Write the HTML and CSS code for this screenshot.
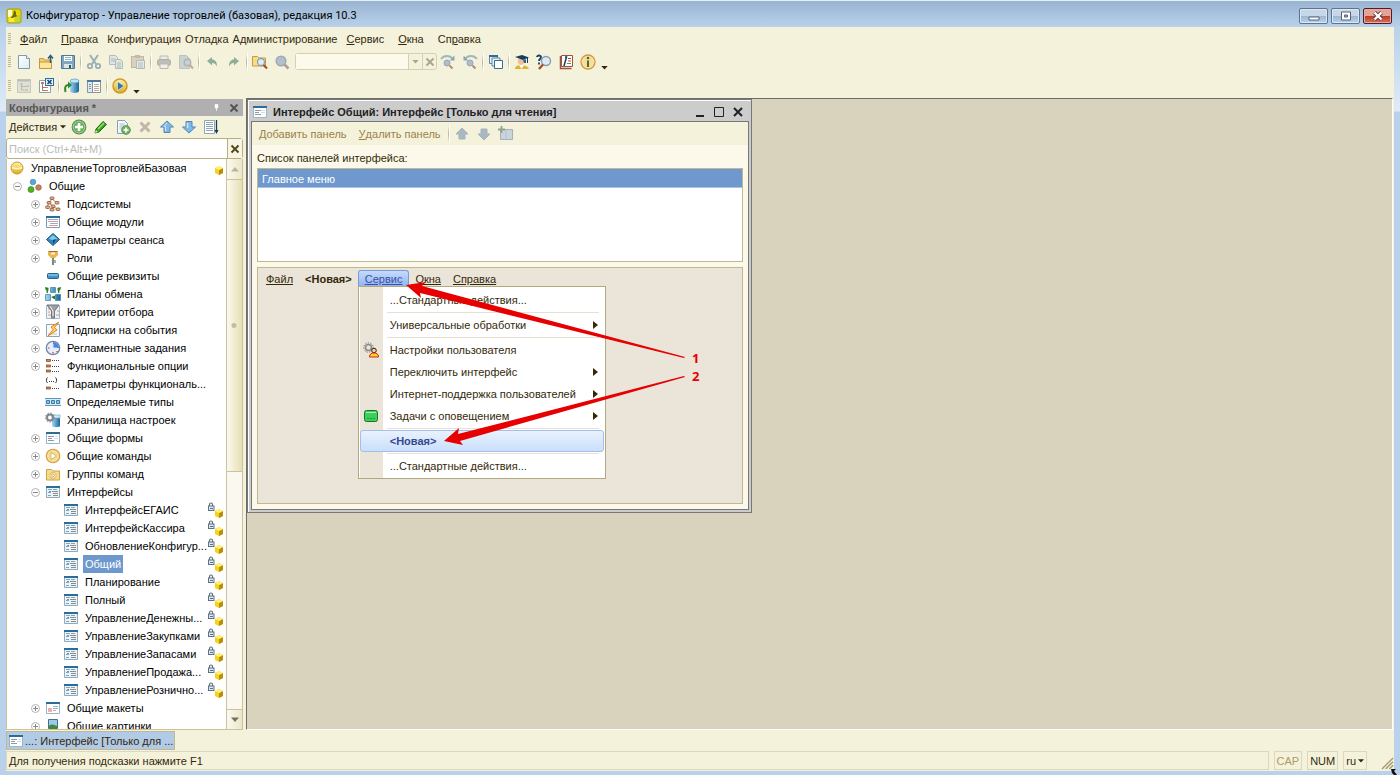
FILE: index.html
```html
<!DOCTYPE html>
<html lang="ru">
<head>
    <meta charset="UTF-8">
    <title>Конфигуратор - Управление торговлей (базовая), редакция 10.3</title>
    <link rel="stylesheet" href="styles.css">
</head>
<body>
    <!-- Набор иконок -->
    <svg class="sprite" aria-hidden="true">
        <defs>
            <linearGradient id="g-blue" x1="0" x2="1"><stop offset="0" stop-color="#a8d8f4"/><stop offset="1" stop-color="#14669c"/></linearGradient>
            <linearGradient id="g-gold" x1="0" y1="0" x2="0" y2="1"><stop offset="0" stop-color="#fff3b0"/><stop offset="1" stop-color="#e2a818"/></linearGradient>
            <linearGradient id="g-page" x1="0" y1="0" x2="1" y2="1"><stop offset="0" stop-color="#fff"/><stop offset="1" stop-color="#dcebf6"/></linearGradient>
        </defs>
        <symbol id="i-app" viewBox="0 0 16 16"><rect x="1" y="1" width="14" height="14" rx="2" fill="#e6d800" stroke="#a89b10"/><path d="M2 2h4v5l-2 2H2z" fill="#fffbd0"/><path d="M8 2l2 2v3l3 2H8l-4 3H3l4-5z" fill="#6b6a20"/><path d="M3 10h5v4H3z" fill="#f7ec3a"/><path d="M9 9l5-2v7H9z" fill="#c3d62c"/></symbol>
        <symbol id="i-new" viewBox="0 0 16 16"><path d="M2.500 1.500h8l3 3v10h-11z" fill="url(#g-page)" stroke="#7f99ad"/><path d="M10.500 1.500v3h3" fill="#fff" stroke="#7f99ad"/></symbol>
        <symbol id="i-open" viewBox="0 0 16 16"><path d="M1.500 4.500h4l1 1.500h7v8.500h-12z" fill="#f6cf6b" stroke="#c09a3c"/><path d="M1.500 8h12v6.500h-12z" fill="#fde69c" stroke="#c09a3c"/><path d="M12.500 9V2M10 4.500l2.500-3 2.500 3" fill="none" stroke="#2c5c80" stroke-width="1.500"/></symbol>
        <symbol id="i-save" viewBox="0 0 16 16"><path d="M1.500 1.500h13v13h-13z" fill="#7fa6c3" stroke="#4f7896"/><path d="M4 2h8v5H4z" fill="#fff"/><path d="M5 3.500h6M5 5.500h6" stroke="#9ab"/><path d="M4 10h8v4H4z" fill="#dbe6ee"/><path d="M9 11h2v3H9z" fill="#355"/></symbol>
        <symbol id="i-cut" viewBox="0 0 16 16"><path d="M4 1l6 9M12 1L6 10" stroke="#52799a" stroke-width="2"/><circle cx="4" cy="12" r="2.200" fill="none" stroke="#52799a" stroke-width="1.800"/><circle cx="12" cy="12" r="2.200" fill="none" stroke="#52799a" stroke-width="1.800"/></symbol>
        <symbol id="i-copy" viewBox="0 0 16 16"><path d="M1.500 1.500h6l2 2v7h-8z" fill="#cfdbe5" stroke="#7691a6"/><path d="M3 5h4M3 7h4" stroke="#7691a6"/><path d="M7.500 5.500h5l2 2v7h-7z" fill="#cfdbe5" stroke="#7691a6"/><path d="M9 9h4M9 11h4M9 13h4" stroke="#7691a6"/></symbol>
        <symbol id="i-paste" viewBox="0 0 16 16"><rect x="1.500" y="2.500" width="12" height="11" fill="#c7b6a6" stroke="#9a8675"/><rect x="5" y="1" width="5" height="3" fill="#8a8f96"/><path d="M6.500 6.500h8v8h-8z" fill="#dbe4ec" stroke="#7691a6"/><path d="M8 9h5M8 11h5M8 13h5" stroke="#7691a6"/></symbol>
        <symbol id="i-print" viewBox="0 0 16 16"><path d="M4 2h8v4H4z" fill="#e4e8ec" stroke="#8b8f95"/><rect x="1.500" y="5.500" width="13" height="6" rx="2" fill="#909499" stroke="#74787d"/><path d="M4 10h8v4.500H4z" fill="#eceff2" stroke="#8b8f95"/><path d="M3 8h2" stroke="#d88"/></symbol>
        <symbol id="i-preview" viewBox="0 0 16 16"><path d="M1.500 1.500h7l3 3v10h-10z" fill="#a9b9c7" stroke="#8a9dac"/><circle cx="9.500" cy="8.500" r="3.200" fill="#a9b9cc" stroke="#6f8297" stroke-width="1.400"/><path d="M12 11l3 3.500" stroke="#a0705c" stroke-width="2"/></symbol>
        <symbol id="i-undo" viewBox="0 0 16 16"><path d="M3 7l5-4v2.500c3 0 5 2 5 7C11.500 10 10.500 9 8 9v2.500z" fill="#8fae9a"/></symbol>
        <symbol id="i-redo" viewBox="0 0 16 16"><path d="M13 7L8 3v2.500c-3 0-5 2-5 7C4.500 10 5.500 9 8 9v2.500z" fill="#8fae9a"/></symbol>
        <symbol id="i-find-all" viewBox="0 0 16 16"><path d="M.5 2.500h5L7 4h6.500v8H.5z" fill="#f8dc88" stroke="#c69c3f"/><circle cx="9" cy="8" r="3.500" fill="#dcedf7" stroke="#8da0b2" stroke-width="1.300"/><path d="M11.500 11l3.500 3.500" stroke="#a6462a" stroke-width="2"/></symbol>
        <symbol id="i-find" viewBox="0 0 16 16"><circle cx="7" cy="7" r="4.800" fill="#b4bfce" stroke="#9fa8b5" stroke-width="1.500"/><path d="M10.500 10.500l4 4" stroke="#b09c94" stroke-width="2.500"/></symbol>
        <symbol id="i-find-next" viewBox="0 0 16 16"><path d="M1 5c3-4 9-4 12 0" fill="none" stroke="#9dbaba" stroke-width="1.800"/><path d="M14.500 1.500v5h-5z" fill="#8ba8b2"/><circle cx="7" cy="9" r="3" fill="#b3bccc" stroke="#97a3b6"/><path d="M9.500 11.500l3 3" stroke="#b08a7c" stroke-width="2"/></symbol>
        <symbol id="i-find-prev" viewBox="0 0 16 16"><path d="M15 5c-3-4-9-4-12 0" fill="none" stroke="#9dbaba" stroke-width="1.800"/><path d="M1.500 1.500v5h5z" fill="#8ba8b2"/><circle cx="8" cy="9" r="3" fill="#b3bccc" stroke="#97a3b6"/><path d="M10.500 11.500l3 3" stroke="#b08a7c" stroke-width="2"/></symbol>
        <symbol id="i-windows" viewBox="0 0 16 16"><path d="M1.500 1.500h8v8h-8z" fill="#e8f1f8" stroke="#5d86a5"/><path d="M1 2h9" stroke="#356b94" stroke-width="2"/><path d="M4 4h8v8H4z" fill="#e8f1f8" stroke="#5d86a5"/><path d="M6.500 6.500h8v8h-8z" fill="#fff" stroke="#356b94"/></symbol>
        <symbol id="i-student" viewBox="0 0 16 16"><path d="M1 15c0-2.500 2-4 6-4s7 1.500 8 4z" fill="#e0b52b"/><path d="M5 11l2.500 4L10 11z" fill="#fff"/><path d="M4 5h6v3c0 4-6 4-6 0z" fill="#f5bd92"/><path d="M1 3l7-2 7 2.500-6 2.500z" fill="#173d63"/><path d="M9 5.500h3V9h-2z" fill="#2c5f8a"/><path d="M13.500 3.500V9" stroke="#173d63"/></symbol>
        <symbol id="i-help-find" viewBox="0 0 16 16"><path d="M1 3c0-2 4-2 4 0S3 5 3 7M3 8.500v2" fill="none" stroke="#173d63" stroke-width="1.800"/><circle cx="10" cy="7" r="4.500" fill="#dcebf5" stroke="#879cae" stroke-width="1.400"/><path d="M7 10.500L3 15" stroke="#a6462a" stroke-width="2.200"/></symbol>
        <symbol id="i-book" viewBox="0 0 16 16"><path d="M3.500 1.500h11v11h-11z" fill="#fff" stroke="#9b543e"/><path d="M2.500 2v12.500h11" fill="none" stroke="#9b543e" stroke-width="1.500"/><path d="M6 12l2.500-9H7" fill="none" stroke="#173d63" stroke-width="1.500"/><path d="M10 4.500h3M10 7h3" stroke="#d33"/><path d="M9 9.500h4" stroke="#4a9a4a"/></symbol>
        <symbol id="i-info" viewBox="0 0 16 16"><circle cx="8" cy="8" r="7" fill="#ffe7a5" stroke="#d1984b" stroke-width="1.300"/><circle cx="8" cy="8" r="5.500" fill="#f9dd94"/><path d="M8 6.500V13" stroke="#3d713d" stroke-width="2"/><circle cx="8" cy="4" r="1.300" fill="#3d713d"/></symbol>
        <symbol id="i-conf-open" viewBox="0 0 16 16"><rect x="1.500" y="1.500" width="13" height="13" fill="#d0d3d1" stroke="#9fa9ae"/><path d="M2 2.500h12" stroke="#8095a3" stroke-width="2"/><path d="M5.500 6v6h3M5.500 8.500h6" fill="none" stroke="#8d8d89"/><path d="M9 11h3v2H9zM11 7h2v2h-2zM4 5h3v2H4z" fill="#aaa59e"/></symbol>
        <symbol id="i-conf-close" viewBox="0 0 16 16"><path d="M1.500 2.500h11v12h-11z" fill="#fff" stroke="#8da3b3"/><path d="M4.500 6v6.500H7M4.500 9.500H7" fill="none" stroke="#a1795d"/><path d="M7 9h3v1H7zM7 12h3v1H7zM3 4h3v2H3z" fill="#c47f57"/><rect x="7.500" y=".5" width="8" height="7" fill="#e4f2fb" stroke="#2c6f9e"/><path d="M9.500 2l4 4M13.500 2l-4 4" stroke="#174668" stroke-width="1.500"/></symbol>
        <symbol id="i-db" viewBox="0 0 16 16"><path d="M6 3v10c0 2.500 9 2.500 9 0V3z" fill="url(#g-blue)"/><ellipse cx="10.500" cy="3" rx="4.500" ry="2" fill="#bfe4f6" stroke="#4d93bd" stroke-width=".7"/><path d="M1.500 14c-1-5 0-7 3-7" fill="none" stroke="#2f8a2a" stroke-width="2"/><path d="M4 3.500L8 7l-4 3.500z" fill="#2f8a2a"/></symbol>
        <symbol id="i-panes" viewBox="0 0 16 16"><path d="M1.500 2.500h13v12h-13z" fill="#fff" stroke="#8297a6"/><path d="M1 3h14" stroke="#4d7a9b" stroke-width="2"/><path d="M2 4h4v10H2z" fill="#dfe8ee"/><path d="M6.500 4v10" stroke="#8297a6"/><path d="M3 6.500h2M3 8.500h2M3 10.500h2" stroke="#7c95a8"/><path d="M8 6.500h5M8 8.500h5M8 10.500h5M8 12.500h5" stroke="#c3ab90"/></symbol>
        <symbol id="i-run" viewBox="0 0 16 16"><circle cx="8" cy="8" r="7" fill="url(#g-gold)" stroke="#cf9a26" stroke-width="1.500"/><path d="M5.500 3.500l6.500 4.500-6.500 4.500z" fill="#2f79ad" stroke="#fff" stroke-width=".5"/></symbol>
        <symbol id="i-add" viewBox="0 0 16 16"><circle cx="8" cy="8" r="6.800" fill="#69b25a" stroke="#5f8f58" stroke-width="1.200"/><circle cx="8" cy="8" r="5.800" fill="none" stroke="#b3d8a5" stroke-width=".8"/><path d="M8 4v8M4 8h8" stroke="#fff" stroke-width="2.600"/></symbol>
        <symbol id="i-pencil" viewBox="0 0 16 16"><path d="M2 14l1-4 7-7.500 3.500 3L6 13z" fill="#36a51e" stroke="#1e6c10"/><path d="M5 10l6-6" stroke="#9be07d" stroke-width="1.500"/><path d="M2 14l.8-3L5 13z" fill="#f3d9a4"/></symbol>
        <symbol id="i-add-copy" viewBox="0 0 16 16"><path d="M2.500 1.500h7l3 3v10h-10z" fill="url(#g-page)" stroke="#86a0b3"/><path d="M4.500 5h5M4.500 7h5M4.500 9h3" stroke="#a9bccb"/><circle cx="11" cy="11" r="4.300" fill="#6fb55f" stroke="#5f8f58"/><path d="M11 8.500v5M8.500 11h5" stroke="#fff" stroke-width="1.600"/></symbol>
        <symbol id="i-del" viewBox="0 0 16 16"><path d="M3.500 3.500l9 9M12.500 3.500l-9 9" stroke="#c3b5ab" stroke-width="3"/></symbol>
        <symbol id="i-up" viewBox="0 0 16 16"><path d="M8 2l6.500 6H11v5.500H5V8H1.500z" fill="#7fb9e4" stroke="#4f87b3"/><path d="M8 4L5 7.500h1.500V12" fill="none" stroke="#cfe7f7"/></symbol>
        <symbol id="i-down" viewBox="0 0 16 16"><path d="M8 14l6.500-6H11V2.500H5V8H1.500z" fill="#7fb9e4" stroke="#4f87b3"/><path d="M6.500 4v5" fill="none" stroke="#cfe7f7" stroke-width="1.500"/></symbol>
        <symbol id="i-up-off" viewBox="0 0 16 16"><path d="M8 2L14 8H11V13H5V8H2z" fill="#abb8c2" stroke="#a3b3c0"/></symbol>
        <symbol id="i-down-off" viewBox="0 0 16 16"><path d="M8 14L14 8H11V3H5V8H2z" fill="#abb8c2" stroke="#a3b3c0"/></symbol>
        <symbol id="i-sort" viewBox="0 0 16 16"><path d="M1.500 1.500h10v13h-10z" fill="#fff" stroke="#8ca5b7"/><path d="M3 3.500h7M3 5.500h7M3 7.500h7M3 9.500h7M3 11.500h7" stroke="#8da6b9"/><path d="M13.500 1v12" stroke="#1f3a50" stroke-width="1.300"/><path d="M11.500 11h4l-2 4z" fill="#1f3a50"/></symbol>
        <symbol id="i-ball" viewBox="0 0 16 16"><circle cx="8" cy="8" r="6" fill="url(#g-gold)" stroke="#c99a2a"/><path d="M3 7.500c3 1.500 7 1.500 10 0" stroke="#fff6c4" fill="none" stroke-width="1.500"/></symbol>
        <symbol id="i-plus" viewBox="0 0 9 9"><circle cx="4.500" cy="4.500" r="4" fill="#fff" stroke="#b4b4b4"/><path d="M4.500 2v5M2 4.500h5" stroke="#888"/></symbol>
        <symbol id="i-minus" viewBox="0 0 9 9"><circle cx="4.500" cy="4.500" r="4" fill="#fff" stroke="#b4b4b4"/><path d="M2 4.500h5" stroke="#888"/></symbol>
        <symbol id="i-common" viewBox="0 0 16 16"><circle cx="6" cy="4" r="2.800" fill="#58a7dc" stroke="#3b7ba8" stroke-width=".6"/><circle cx="4" cy="11.500" r="3" fill="#4fb31c" stroke="#2f7d0d" stroke-width=".6"/><circle cx="11.500" cy="9.500" r="2.800" fill="#c5805f" stroke="#8b4d31" stroke-width=".6"/></symbol>
        <symbol id="i-subsys" viewBox="0 0 16 16"><path d="M7 3L4 7l-2 4M4 7l4 3 4 3M7 3l5 4" fill="none" stroke="#a8876f"/><g fill="#e2b28a" stroke="#86512f" stroke-width=".8"><rect x="5" y="1" width="4" height="2.500" rx="1"/><rect x="2" y="5.500" width="4" height="2.500" rx="1"/><rect x="10" y="5.500" width="4" height="2.500" rx="1"/><rect x=".6" y="10" width="4" height="2.500" rx="1"/><rect x="6" y="9" width="4" height="2.500" rx="1"/><rect x="11" y="12" width="4" height="2.500" rx="1"/><rect x="5" y="12.500" width="4" height="2.500" rx="1"/></g></symbol>
        <symbol id="i-module" viewBox="0 0 16 16"><path d="M1.500 2.500h13v11h-13z" fill="#fff" stroke="#7c9bb3"/><path d="M1 3h14" stroke="#2d6c98" stroke-width="2"/><path d="M3 5.500h10M5 9.500h8" stroke="#8fb0cc"/><path d="M3 7.500h10M4 11.500h9" stroke="#dd9a94"/></symbol>
        <symbol id="i-param" viewBox="0 0 16 16"><path d="M8 1.500l6.500 6-6.500 6-6.500-6z" fill="#2f86bf" stroke="#1c547c"/><path d="M8 3l4.500 4L8 8 3.500 7z" fill="#83c8ee"/><path d="M8 8l3-1-3 5z" fill="#124166"/></symbol>
        <symbol id="i-key" viewBox="0 0 16 16"><path d="M3 1h10v4l-3 3H6L3 5z" fill="#e8b54f"/><path d="M6 2.500h4v2H6z" fill="#fff3c8"/><path d="M4 1.500h8" stroke="#a9673c"/><path d="M7 8h2v7H7z" fill="#7f858b"/><path d="M9 10h2v3H9z" fill="#a9aeb3"/></symbol>
        <symbol id="i-attr" viewBox="0 0 16 16"><rect x="2.500" y="5.500" width="11" height="5" rx="1" fill="#3f95c7" stroke="#1b658f"/><path d="M3 7h10" stroke="#a8d8ef"/></symbol>
        <symbol id="i-plan" viewBox="0 0 16 16"><g fill="url(#g-blue)" stroke="#3f7fa6" stroke-width=".7"><path d="M5.500 1.500h5v5h-5zM.5 8.500h5v6h-5zM10.500 8.500h5v6h-5z"/></g><path d="M0 1l4 1-3 3zM16 1l-4 1 3 3zM6 11l4-1.500v4z" fill="#277d20"/><path d="M3 3l-1 4M13 3l1 4" stroke="#277d20" stroke-width="1.300"/></symbol>
        <symbol id="i-filter" viewBox="0 0 16 16"><path d="M1.500 1.500h13v13h-13z" fill="#eef3f7" stroke="#a6b9c7"/><path d="M3 5h2M3 8h2M3 11h3M11 11h3M12 7h2" stroke="#e08e86"/><path d="M2 1h12L9.500 7v7h-3V7z" fill="#9a9fa4" stroke="#71777c"/><path d="M5 2l3 5v5" fill="none" stroke="#f0f2f4"/></symbol>
        <symbol id="i-event" viewBox="0 0 16 16"><path d="M1.500 2.500h13v12h-13z" fill="#f7fafc" stroke="#8da6b8"/><path d="M3 12h9" stroke="#b3c7d5"/><path d="M14 0L6 5l2 2.500L3 14l9-6-2.500-2.500z" fill="#ffd25a" stroke="#d9781b" stroke-width=".9"/></symbol>
        <symbol id="i-clock" viewBox="0 0 16 16"><circle cx="8" cy="8" r="6.700" fill="#e6effc" stroke="#6f87ab" stroke-width="1.300"/><path d="M8 8V2a6 6 0 0 1 6 6z" fill="#4b84d6"/><path d="M8 8V4M8 8h4" stroke="#d6e4fa"/><path d="M8 12v1.500M3 8h1.500M12 11v1" stroke="#d33" stroke-width="1.200"/></symbol>
        <symbol id="i-options" viewBox="0 0 16 16"><g fill="#c98b62" stroke="#84421a" stroke-width=".7"><rect x="1.500" y="1.500" width="4" height="2"/><rect x="1.500" y="7" width="4" height="2"/><rect x="1.500" y="12" width="4" height="2"/></g><path d="M7 2.500h8M7 8.500h8M7 13.500h8" stroke="#444" stroke-dasharray="1 1"/></symbol>
        <symbol id="i-optparam" viewBox="0 0 16 16"><path d="M2.500 1.500c-1.500 1.500-1.500 4 0 5.500M10.500 1.500c1.500 1.500 1.500 4 0 5.500" fill="none" stroke="#333"/><path d="M4 5.500h6" stroke="#333" stroke-dasharray="1 1"/><rect x="1.500" y="11" width="4" height="2" fill="#c98b62" stroke="#84421a" stroke-width=".7"/><path d="M7 12.500h8" stroke="#444" stroke-dasharray="1 1"/></symbol>
        <symbol id="i-types" viewBox="0 0 16 16"><rect y="4" width="16" height="8" fill="#dcecf6"/><path d="M0 4.500h16M0 11.500h16" stroke="#5b97bd"/><path d="M1.500 6.500h3v3h-3zM6.500 6.500h3v3h-3zM11.500 6.500h3v3h-3z" fill="#8ec4e4" stroke="#3f7ba3"/></symbol>
        <symbol id="i-storage" viewBox="0 0 16 16"><path d="M7 5v9c0 1.500 8 1.500 8 0V5z" fill="url(#g-blue)"/><path d="M7 3h8v3H7z" fill="#d5e9f4" stroke="#7ea7c0" stroke-width=".7"/><circle cx="5" cy="5.500" r="3" fill="none" stroke="#7f868c" stroke-width="2"/><circle cx="5" cy="5.500" r="4.500" fill="none" stroke="#7f868c" stroke-dasharray="1.500 1.500"/></symbol>
        <symbol id="i-form" viewBox="0 0 16 16"><path d="M1.500 2.500h13v11h-13z" fill="#fff" stroke="#9bb4c7"/><path d="M1 3h14" stroke="#2d6c98" stroke-width="2"/><path d="M3 6.500h6M3 8.500h4M3 10.500h6" stroke="#8b9aa6"/><path d="M9 8.500h4M10 6.500h3" stroke="#d3dfe8"/></symbol>
        <symbol id="i-command" viewBox="0 0 16 16"><circle cx="8" cy="8" r="6.700" fill="#fbe3a0" stroke="#d5a549" stroke-width="1.300"/><circle cx="8" cy="8" r="5" fill="#f7dc8f"/><path d="M6 4.500L11.500 8 6 11.500z" fill="#fff" stroke="#c9a04e" stroke-width=".7"/></symbol>
        <symbol id="i-cmdgroup" viewBox="0 0 16 16"><path d="M1.500 3.500h5L8 5h6.500v9h-13z" fill="#f8dc88" stroke="#cda349"/><circle cx="8" cy="9.500" r="3.300" fill="#fbeab8" stroke="#dfb970"/><path d="M7 7.500l3 2-3 2z" fill="#fff" stroke="#b8903c" stroke-width=".6"/></symbol>
        <symbol id="i-iface" viewBox="0 0 16 16"><path d="M1.500 2.500h13v11h-13z" fill="#eaf3f8" stroke="#8fa9bd"/><path d="M1 3h14" stroke="#2d6c98" stroke-width="2"/><path d="M3 5.500h4M3 8.500h3M3 11.500h3M8 5.500h4" stroke="#7ba6c4"/><path d="M7 7h6v1H7zM8 9h5v1H8zM8 11h5v1H8zM4 7h2v1H4z" fill="#8c8c8c"/></symbol>
        <symbol id="i-layout" viewBox="0 0 16 16"><path d="M1.500 2.500h13v11h-13z" fill="#fff" stroke="#9bb4c7"/><path d="M1 3h14" stroke="#2d6c98" stroke-width="2"/><path d="M8 6.500h5M8 8.500h5" stroke="#9cb6c9"/><path d="M3 8h4v4H3z" fill="#eab5ad"/><path d="M8 10.500h3" stroke="#e2a197"/></symbol>
        <symbol id="i-picture" viewBox="0 0 16 16"><path d="M3.500 1.500h9v9h-9z" fill="#9ccbea" stroke="#46708f"/><path d="M4 8c3-3 5-1 8 0v3H4z" fill="#3e8a35"/><path d="M3 13h10" stroke="#345" stroke-width="3"/></symbol>
        <symbol id="i-cube" viewBox="0 0 16 16"><path d="M8 8l4-2 4 2v5l-4 2-4-2z" fill="#f6d21e"/><path d="M12 10l4-2v5l-4 2z" fill="#b98e0c"/><path d="M8 8l4-2 4 2-4 2z" fill="#fff07a"/></symbol>
        <symbol id="i-lock" viewBox="0 0 16 16"><path d="M2.500 4V2.500c0-2 3-2 3 0V4" fill="none" stroke="#5c7284" stroke-width="1.200"/><rect x="1.500" y="4" width="5.500" height="4.500" fill="#dfe7ed" stroke="#5c7284"/><path d="M3 6.500h3" stroke="#5c7284"/><path d="M8 9l4-2 4 2v5l-4 2-4-2z" fill="#f6d21e"/><path d="M12 11l4-2v5l-4 2z" fill="#b98e0c"/><path d="M8 9l4-2 4 2-4 2z" fill="#fff07a"/></symbol>
        <symbol id="i-addpanel" viewBox="0 0 16 16"><path d="M2.500 3.500h12v10h-12z" fill="#c9d4dc" stroke="#a3b1bb"/><path d="M8 4v9" stroke="#b5c1ca"/><path d="M3.500 0v7M0 3.500h7" stroke="#8fa58a" stroke-width="1.800"/></symbol>
        <symbol id="i-usercfg" viewBox="0 0 16 16"><circle cx="5.500" cy="5.500" r="3" fill="none" stroke="#8a8a8a" stroke-width="1.600"/><circle cx="5.500" cy="5.500" r="4.700" fill="none" stroke="#777" stroke-dasharray="1.300 1.300"/><circle cx="11" cy="8.500" r="2.300" fill="#f7cf9a" stroke="#222"/><path d="M6.500 15c0-3 2-4 4.500-4s4.500 1 4.500 4z" fill="#ffd91a" stroke="#d51f1f"/></symbol>
        <symbol id="i-task" viewBox="0 0 16 16"><rect x="1.500" y="2.500" width="13" height="11" rx="2" fill="#3fce5b" stroke="#14782a"/><path d="M3 4.500h10" stroke="#a4f2b1"/><path d="M4 10.500h8" stroke="#1f9a3b" stroke-dasharray="2 1"/></symbol>
        <symbol id="i-caret" viewBox="0 0 8 5"><path d="M0 0h8L4 4.500z" fill="currentColor"/></symbol>
        <symbol id="i-cross" viewBox="0 0 10 10"><path d="M1.500 1.500l7 7M8.500 1.500l-7 7" stroke="currentColor" stroke-width="2"/></symbol>
    </svg>

    <!-- Заголовок главного окна -->
    <header class="titlebar">
        <svg class="icon"><use href="#i-app"/></svg>
        <h1>Конфигуратор - Управление торговлей (базовая), редакция 10.3</h1>
        <div class="window-buttons">
            <button aria-label="Свернуть"><svg viewBox="0 0 14 10"><path d="M2 6h10v3H2z" fill="#fff" stroke="#566378"/></svg></button>
            <button aria-label="Развернуть"><svg viewBox="0 0 14 10"><path d="M2.500 1h9v8h-9z" fill="#fff" stroke="#566378"/><path d="M5.500 4h3v2h-3z" fill="#9fb9d6" stroke="#566378"/></svg></button>
            <button class="close" aria-label="Закрыть"><svg viewBox="0 0 14 10"><path d="M3.500 1.500l7 7M10.500 1.500l-7 7" stroke="#5d3940" stroke-width="4"/><path d="M3.500 1.500l7 7M10.500 1.500l-7 7" stroke="#fff" stroke-width="2.400"/></svg></button>
        </div>
    </header>

    <div class="client">
        <!-- Главное меню -->
        <nav class="menubar">
            <span class="grip"></span>
            <button><u>Ф</u>айл</button>
            <button><u>П</u>равка</button>
            <button class="tight">Конфигурация</button>
            <button class="tight">Отладка</button>
            <button class="tight">Администрирование</button>
            <button><u>С</u>ервис</button>
            <button><u>О</u>кна</button>
            <button>Сп<u>р</u>авка</button>
        </nav>

        <!-- Панели инструментов -->
        <div class="toolbar">
            <span class="grip"></span>
            <button aria-label="Новый"><svg class="icon"><use href="#i-new"/></svg></button>
            <button aria-label="Открыть"><svg class="icon"><use href="#i-open"/></svg></button>
            <button aria-label="Сохранить"><svg class="icon"><use href="#i-save"/></svg></button>
            <span class="sep"></span>
            <button class="off" aria-label="Вырезать"><svg class="icon"><use href="#i-cut"/></svg></button>
            <button class="off" aria-label="Копировать"><svg class="icon"><use href="#i-copy"/></svg></button>
            <button class="off" aria-label="Вставить"><svg class="icon"><use href="#i-paste"/></svg></button>
            <span class="sep"></span>
            <button class="off" aria-label="Печать"><svg class="icon"><use href="#i-print"/></svg></button>
            <button class="off" aria-label="Просмотр"><svg class="icon"><use href="#i-preview"/></svg></button>
            <span class="sep"></span>
            <button aria-label="Отменить"><svg class="icon"><use href="#i-undo"/></svg></button>
            <button aria-label="Повторить"><svg class="icon"><use href="#i-redo"/></svg></button>
            <span class="sep"></span>
            <button aria-label="Глобальный поиск"><svg class="icon"><use href="#i-find-all"/></svg></button>
            <button aria-label="Найти"><svg class="icon"><use href="#i-find"/></svg></button>
            <div class="find-box">
                <input type="text" aria-label="Строка поиска">
                <button aria-label="История поиска"><svg class="caret"><use href="#i-caret"/></svg></button>
                <button aria-label="Очистить"><svg class="cross"><use href="#i-cross"/></svg></button>
            </div>
            <button aria-label="Найти далее"><svg class="icon"><use href="#i-find-next"/></svg></button>
            <button aria-label="Найти ранее"><svg class="icon"><use href="#i-find-prev"/></svg></button>
            <span class="sep"></span>
            <button aria-label="Окна"><svg class="icon"><use href="#i-windows"/></svg></button>
            <span class="sep"></span>
            <button aria-label="Синтакс-помощник"><svg class="icon"><use href="#i-student"/></svg></button>
            <button aria-label="Поиск в помощнике"><svg class="icon"><use href="#i-help-find"/></svg></button>
            <button aria-label="Содержание справки"><svg class="icon"><use href="#i-book"/></svg></button>
            <button aria-label="О программе"><svg class="icon"><use href="#i-info"/></svg></button>
            <button class="more" aria-label="Ещё"><svg class="caret"><use href="#i-caret"/></svg></button>
        </div>
        <div class="toolbar second">
            <span class="grip"></span>
            <button class="off" aria-label="Открыть конфигурацию"><svg class="icon"><use href="#i-conf-open"/></svg></button>
            <button aria-label="Закрыть конфигурацию"><svg class="icon"><use href="#i-conf-close"/></svg></button>
            <span class="sep"></span>
            <button aria-label="Обновить базу данных"><svg class="icon"><use href="#i-db"/></svg></button>
            <button aria-label="Окно конфигурации"><svg class="icon"><use href="#i-panes"/></svg></button>
            <span class="sep"></span>
            <button aria-label="Начать отладку"><svg class="icon"><use href="#i-run"/></svg></button>
            <button class="more" aria-label="Ещё"><svg class="caret"><use href="#i-caret"/></svg></button>
        </div>

        <main class="workspace">
            <!-- Дерево конфигурации -->
            <aside class="sidebar">
                <div class="sidebar-title">
                    <h2>Конфигурация *</h2>
                    <button aria-label="Закрепить"><svg class="pin" viewBox="0 0 6 8"><path d="M1 0h4v5H1z" fill="#fff"/><path d="M3 5v3" stroke="#fff"/></svg></button>
                    <button aria-label="Закрыть панель"><svg class="cross"><use href="#i-cross"/></svg></button>
                </div>
                <div class="actions">
                    <button class="text">Действия <svg class="caret"><use href="#i-caret"/></svg></button>
                    <button aria-label="Добавить"><svg class="icon"><use href="#i-add"/></svg></button>
                    <button aria-label="Изменить"><svg class="icon"><use href="#i-pencil"/></svg></button>
                    <button aria-label="Скопировать"><svg class="icon"><use href="#i-add-copy"/></svg></button>
                    <button aria-label="Удалить"><svg class="icon"><use href="#i-del"/></svg></button>
                    <button aria-label="Вверх"><svg class="icon"><use href="#i-up"/></svg></button>
                    <button aria-label="Вниз"><svg class="icon"><use href="#i-down"/></svg></button>
                    <button aria-label="Сортировать"><svg class="icon"><use href="#i-sort"/></svg></button>
                </div>
                <div class="search">
                    <input type="text" placeholder="Поиск (Ctrl+Alt+M)" aria-label="Поиск">
                    <button aria-label="Очистить поиск"><svg class="cross"><use href="#i-cross"/></svg></button>
                </div>
                <div class="tree-box">
                    <ul class="tree">
                        <li><svg class="icon"><use href="#i-ball"/></svg><span>УправлениеТорговлейБазовая</span><svg class="badge"><use href="#i-cube"/></svg></li>
                        <li><button aria-label="Свернуть"><svg><use href="#i-minus"/></svg></button><svg class="icon"><use href="#i-common"/></svg><span>Общие</span></li>
                        <li class="level2"><button aria-label="Развернуть"><svg><use href="#i-plus"/></svg></button><svg class="icon"><use href="#i-subsys"/></svg><span>Подсистемы</span></li>
                        <li class="level2"><button aria-label="Развернуть"><svg><use href="#i-plus"/></svg></button><svg class="icon"><use href="#i-module"/></svg><span>Общие модули</span></li>
                        <li class="level2"><button aria-label="Развернуть"><svg><use href="#i-plus"/></svg></button><svg class="icon"><use href="#i-param"/></svg><span>Параметры сеанса</span></li>
                        <li class="level2"><button aria-label="Развернуть"><svg><use href="#i-plus"/></svg></button><svg class="icon"><use href="#i-key"/></svg><span>Роли</span></li>
                        <li class="level3"><svg class="icon"><use href="#i-attr"/></svg><span>Общие реквизиты</span></li>
                        <li class="level2"><button aria-label="Развернуть"><svg><use href="#i-plus"/></svg></button><svg class="icon"><use href="#i-plan"/></svg><span>Планы обмена</span></li>
                        <li class="level2"><button aria-label="Развернуть"><svg><use href="#i-plus"/></svg></button><svg class="icon"><use href="#i-filter"/></svg><span>Критерии отбора</span></li>
                        <li class="level2"><button aria-label="Развернуть"><svg><use href="#i-plus"/></svg></button><svg class="icon"><use href="#i-event"/></svg><span>Подписки на события</span></li>
                        <li class="level2"><button aria-label="Развернуть"><svg><use href="#i-plus"/></svg></button><svg class="icon"><use href="#i-clock"/></svg><span>Регламентные задания</span></li>
                        <li class="level2"><button aria-label="Развернуть"><svg><use href="#i-plus"/></svg></button><svg class="icon"><use href="#i-options"/></svg><span>Функциональные опции</span></li>
                        <li class="level3"><svg class="icon"><use href="#i-optparam"/></svg><span>Параметры функциональ...</span></li>
                        <li class="level3"><svg class="icon"><use href="#i-types"/></svg><span>Определяемые типы</span></li>
                        <li class="level3"><svg class="icon"><use href="#i-storage"/></svg><span>Хранилища настроек</span></li>
                        <li class="level2"><button aria-label="Развернуть"><svg><use href="#i-plus"/></svg></button><svg class="icon"><use href="#i-form"/></svg><span>Общие формы</span></li>
                        <li class="level2"><button aria-label="Развернуть"><svg><use href="#i-plus"/></svg></button><svg class="icon"><use href="#i-command"/></svg><span>Общие команды</span></li>
                        <li class="level2"><button aria-label="Развернуть"><svg><use href="#i-plus"/></svg></button><svg class="icon"><use href="#i-cmdgroup"/></svg><span>Группы команд</span></li>
                        <li class="level2"><button aria-label="Свернуть"><svg><use href="#i-minus"/></svg></button><svg class="icon"><use href="#i-iface"/></svg><span>Интерфейсы</span></li>
                        <li class="level4"><svg class="icon"><use href="#i-iface"/></svg><span>ИнтерфейсЕГАИС</span><svg class="badge"><use href="#i-lock"/></svg></li>
                        <li class="level4"><svg class="icon"><use href="#i-iface"/></svg><span>ИнтерфейсКассира</span><svg class="badge"><use href="#i-lock"/></svg></li>
                        <li class="level4"><svg class="icon"><use href="#i-iface"/></svg><span>ОбновлениеКонфигур...</span><svg class="badge"><use href="#i-lock"/></svg></li>
                        <li class="level4 selected"><svg class="icon"><use href="#i-iface"/></svg><span>Общий</span><svg class="badge"><use href="#i-lock"/></svg></li>
                        <li class="level4"><svg class="icon"><use href="#i-iface"/></svg><span>Планирование</span><svg class="badge"><use href="#i-lock"/></svg></li>
                        <li class="level4"><svg class="icon"><use href="#i-iface"/></svg><span>Полный</span><svg class="badge"><use href="#i-lock"/></svg></li>
                        <li class="level4"><svg class="icon"><use href="#i-iface"/></svg><span>УправлениеДенежны...</span><svg class="badge"><use href="#i-lock"/></svg></li>
                        <li class="level4"><svg class="icon"><use href="#i-iface"/></svg><span>УправлениеЗакупками</span><svg class="badge"><use href="#i-lock"/></svg></li>
                        <li class="level4"><svg class="icon"><use href="#i-iface"/></svg><span>УправлениеЗапасами</span><svg class="badge"><use href="#i-lock"/></svg></li>
                        <li class="level4"><svg class="icon"><use href="#i-iface"/></svg><span>УправлениеПродажа...</span><svg class="badge"><use href="#i-lock"/></svg></li>
                        <li class="level4"><svg class="icon"><use href="#i-iface"/></svg><span>УправлениеРознично...</span><svg class="badge"><use href="#i-lock"/></svg></li>
                        <li class="level2"><button aria-label="Развернуть"><svg><use href="#i-plus"/></svg></button><svg class="icon"><use href="#i-layout"/></svg><span>Общие макеты</span></li>
                        <li class="level2"><button aria-label="Развернуть"><svg><use href="#i-plus"/></svg></button><svg class="icon"><use href="#i-picture"/></svg><span>Общие картинки</span></li>
                    </ul>
                    <div class="scrollbar">
                        <button class="scroll-up" aria-label="Прокрутить вверх"><svg class="caret"><use href="#i-caret"/></svg></button>
                        <div class="thumb"></div>
                        <div class="track"></div>
                        <button aria-label="Прокрутить вниз"><svg class="caret"><use href="#i-caret"/></svg></button>
                    </div>
                </div>
            </aside>

            <section class="desktop">
                <!-- Окно редактора интерфейса -->
                <div class="child-window">
                    <div class="child-title">
                        <svg class="icon"><use href="#i-form"/></svg>
                        <h2>Интерфейс Общий: Интерфейс [Только для чтения]</h2>
                        <button aria-label="Свернуть окно"><svg viewBox="0 0 12 12"><path d="M2 10h8" stroke="#222" stroke-width="2"/></svg></button>
                        <button aria-label="Развернуть окно"><svg viewBox="0 0 12 12"><path d="M1.500 1.500h9v9h-9z" fill="none" stroke="#222"/></svg></button>
                        <button aria-label="Закрыть окно"><svg viewBox="0 0 12 12"><path d="M2 2l8 8M10 2l-8 8" stroke="#222" stroke-width="2"/></svg></button>
                    </div>
                    <div class="child-body">
                        <div class="panel-tools">
                            <button class="text"><u>Д</u>обавить панель</button>
                            <button class="text"><u>У</u>далить панель</button>
                            <span class="sep"></span>
                            <button aria-label="Вверх"><svg class="icon"><use href="#i-up-off"/></svg></button>
                            <button aria-label="Вниз"><svg class="icon"><use href="#i-down-off"/></svg></button>
                            <button aria-label="Новая панель"><svg class="icon"><use href="#i-addpanel"/></svg></button>
                        </div>
                        <div class="panel-form">
                            <h3>Список панелей интерфейса:</h3>
                            <ul class="panel-list">
                                <li class="selected">Главное меню</li>
                            </ul>
                            <div class="preview">
                                <nav class="preview-menu">
                                    <button>Файл</button>
                                    <button class="new">&lt;Новая&gt;</button>
                                    <div class="opened">
                                        <button class="active">Сервис</button>
                                        <div class="dropdown">
                                            <button>...Стандартные действия...</button>
                                            <hr>
                                            <button class="sub">Универсальные обработки</button>
                                            <hr>
                                            <button><svg class="icon"><use href="#i-usercfg"/></svg>Настройки пользователя</button>
                                            <button class="sub">Переключить интерфейс</button>
                                            <button class="sub">Интернет-поддержка пользователей</button>
                                            <button class="sub"><svg class="icon"><use href="#i-task"/></svg>Задачи с оповещением</button>
                                            <hr>
                                            <button class="current">&lt;Новая&gt;</button>
                                            <hr>
                                            <button>...Стандартные действия...</button>
                                        </div>
                                    </div>
                                    <button>Окна</button>
                                    <button>Справка</button>
                                </nav>
                            </div>
                        </div>
                    </div>
                    <!-- Выноски 1 и 2 -->
                    <svg class="callouts" viewBox="0 0 505 414">
                        <path d="M159 186L179 183l-4 4L438 258l-1 1L173 194l1 5z" fill="#e60000"/>
                        <path d="M197 342L212 329l-1 6L437 277l1 1L213 342l3 4z" fill="#e60000"/>
                        <text x="445" y="264">1</text>
                        <text x="445" y="282">2</text>
                    </svg>
                </div>
            </section>
        </main>

        <!-- Панель окон -->
        <div class="taskbar">
            <button><svg class="icon"><use href="#i-form"/></svg>...: Интерфейс [Только для ...</button>
        </div>

        <!-- Строка состояния -->
        <footer class="statusbar">
            <span class="hint">Для получения подсказки нажмите F1</span>
            <span class="cell dim">CAP</span>
            <span class="cell">NUM</span>
            <button class="cell lang">ru <svg class="caret"><use href="#i-caret"/></svg></button>
            <svg class="size-grip" viewBox="0 0 14 14"><path d="M1 13L13 1M5 13l8-8M9 13l4-4" stroke="#a69c72" stroke-width="1.500"/></svg>
        </footer>
    </div>
    <svg class="cursor" viewBox="0 0 9 6"><path d="M0 0h5L3 2l3 4H3L1 4z" fill="#111"/></svg>
</body>
</html>
```
FILE: styles.css
```css
* {
    box-sizing: border-box;
}

/* Общий вид главного окна */
body {
    display: flex;
    flex-direction: column;
    height: 100vh;
    margin: 0;
    padding: 0 6px 4px;
    overflow: hidden;
    font-family: "Liberation Sans", Arial, sans-serif;
    font-size: 11px;
    line-height: 14px;
    color: #33290a;
    background: linear-gradient(#98b3d1, #b9d1ea 27px, #dfebf7 111px, #b9d1ea 112px);
    border-top: 1px solid #e4f0f4;
}

button, input {
    font: inherit;
    color: inherit;
    margin: 0;
    padding: 0;
    border: 0;
    background: none;
}

button {
    display: flex;
    align-items: center;
    justify-content: center;
    white-space: nowrap;
}

h1, h2, h3, ul {
    margin: 0;
    padding: 0;
    font-size: inherit;
    list-style: none;
}

svg {
    flex: none;
}

.sprite {
    position: absolute;
    width: 0;
    height: 0;
}

.icon {
    width: 16px;
    height: 16px;
}

.caret {
    width: 7px;
    height: 4px;
}

.cross {
    width: 10px;
    height: 10px;
}

/* Заголовок */
.titlebar {
    display: flex;
    align-items: center;
    gap: 4px;
    height: 26px;
    padding: 4px 2px 0 0;
}

.titlebar h1 {
    flex: 1;
    font: 11px/16px Roboto, sans-serif;
    color: #000;
}

.window-buttons {
    display: flex;
    gap: 3px;
}

.window-buttons button {
    width: 29px;
    height: 16px;
    border: 1px solid #5f738e;
    border-radius: 2px;
    background: linear-gradient(#c6d7ea 48%, #9bb5d3 50%, #b9d2ea);
    box-shadow: inset 0 0 0 1px #dbe8f5;
}

.window-buttons .close {
    border-color: #541a2a;
    background: linear-gradient(#e3a396 48%, #b83a23 50%, #d3765c);
    box-shadow: inset 0 0 0 1px #e5aca2;
}

.window-buttons svg {
    width: 14px;
    height: 10px;
}

.client {
    display: flex;
    flex-direction: column;
    flex: 1;
    min-height: 0;
    background: #f5f2dc;
}

/* Меню и панели инструментов */
.menubar, .toolbar {
    display: flex;
    align-items: center;
    height: 23px;
    padding-left: 2px;
}

.toolbar.second {
    height: 25px;
}

.grip {
    width: 3px;
    height: 12px;
    margin-right: 2px;
    background: repeating-linear-gradient(#bdb795 0 1px, transparent 1px 2px);
}

.menubar button {
    height: 20px;
    padding: 0 7px;
}

.menubar button.tight {
    padding: 0 2px;
}

.toolbar > button, .actions button {
    width: 22px;
    height: 20px;
}

.toolbar .off {
    opacity: 0.55;
}

.toolbar .more {
    width: 10px;
    align-items: flex-end;
    padding-bottom: 2px;
}

.sep {
    width: 2px;
    height: 18px;
    margin: 0 1px;
    background: linear-gradient(#f5f2dc, #b9b398, #f5f2dc);
    border-right: 1px solid #fff;
}

.find-box {
    display: flex;
    width: 142px;
    height: 17px;
    margin-left: 2px;
    color: #aaa58e;
    border: 1px solid #d5d0b4;
    border-radius: 3px;
    background: #f5f2dc;
}

.find-box input {
    flex: 1;
    min-width: 0;
    background: #fcfaeb;
}

.find-box button {
    width: 14px;
    border-left: 1px solid #d5d0b4;
}

/* Рабочая область */
.workspace {
    display: flex;
    flex: 1;
    gap: 3px;
    min-height: 0;
}

.sidebar {
    display: flex;
    flex-direction: column;
    width: 237px;
}

.sidebar-title {
    display: flex;
    align-items: center;
    gap: 10px;
    height: 17px;
    padding: 0 4px 0 3px;
    margin-top: 1px;
    color: #555;
    background: #b0b0b0;
}

.sidebar-title h2 {
    flex: 1;
}

.pin {
    width: 5px;
    height: 7px;
}

.actions {
    display: flex;
    align-items: center;
    height: 22px;
    padding-left: 3px;
}

.actions .text {
    width: auto;
    gap: 3px;
    margin-right: 2px;
}

.actions .caret {
    width: 6px;
}

.search {
    display: flex;
    height: 21px;
    border: 1px solid #b8ae84;
    border-radius: 3px;
    background: #fff;
}

.search input {
    flex: 1;
    min-width: 0;
    padding-left: 2px;
}

.search input::placeholder {
    color: #bcbcbc;
}

.search button {
    width: 15px;
    border-left: 1px solid #b8ae84;
    background: #f8f5e2;
    color: #55481a;
}

/* Дерево */
.tree-box {
    display: flex;
    flex: 1;
    min-height: 0;
    margin-bottom: 1px;
    border: solid #c9c29c;
    border-width: 0 1px 1px;
    background: #fff;
    overflow: hidden;
}

.tree {
    flex: 1;
    padding-left: 1px;
    overflow: hidden;
    color: #000;
}

.tree li {
    display: flex;
    align-items: center;
    height: 18px;
    padding-right: 3px;
}

.tree .level2 {
    padding-left: 18px;
}

.tree .level3 {
    padding-left: 36px;
}

.tree .level4 {
    padding-left: 54px;
}

.tree button {
    width: 18px;
    height: 18px;
}

.tree button svg {
    width: 9px;
    height: 9px;
}

.tree .icon {
    margin: 0 1px;
}

.tree span {
    min-width: 0;
    height: 18px;
    margin-left: 3px;
    padding: 0 2px;
    line-height: 18px;
    white-space: nowrap;
}

.tree .selected span {
    color: #fff;
    background: #6f98ce;
}

.badge {
    width: 16px;
    height: 16px;
    margin-left: auto;
}

.scrollbar {
    display: flex;
    flex-direction: column;
    width: 16px;
    border-left: 1px solid #c9c29c;
    background: #faf8f0;
    color: #77725f;
}

.scrollbar button {
    height: 20px;
    border-top: 1px solid #c9c29c;
    background: linear-gradient(to right, #fbf9ee, #ebe6ca);
}

.scrollbar .scroll-up {
    border-top: 0;
    color: #bcb699;
}

.scrollbar .caret {
    width: 8px;
    height: 6px;
}

.scroll-up svg {
    transform: rotate(180deg);
}

.thumb {
    flex: 293;
    border: solid #c9c29c;
    border-width: 1px 0;
    background: radial-gradient(circle at 7px 50%, #c4be9c 2px, transparent 3px), linear-gradient(to right, #fbf9ee, #e6dfb4);
}

.track {
    flex: 238;
}

/* Рабочий стол конфигуратора */
.desktop {
    flex: 1;
    position: relative;
    margin: 0 1px 1px 0;
    border: 1px solid #fff;
    border-top-color: #6d6d6d;
    border-left-color: #6d6d6d;
    background: #d9d3bd;
}

.child-window {
    position: absolute;
    top: 0;
    left: 0;
    display: flex;
    flex-direction: column;
    width: 505px;
    height: 414px;
    padding: 2px 2px 2px 3px;
    border: 1px solid #777;
    background: #ccc;
    box-shadow: inset 1px 1px 0 #fff;
}

.child-title {
    display: flex;
    align-items: center;
    gap: 5px;
    height: 19px;
    padding: 0 4px 0 1px;
    color: #222;
}

.child-title h2 {
    flex: 1;
}

.child-title button {
    width: 14px;
    height: 14px;
}

.child-title button svg {
    width: 12px;
    height: 12px;
}

.child-body {
    display: flex;
    flex-direction: column;
    flex: 1;
    border: 1px solid #777;
    background: #fcf9ea;
}

.panel-tools {
    display: flex;
    align-items: center;
    height: 23px;
    padding-left: 1px;
    background: #f5f2dc;
    color: #9a8347;
}

.panel-tools button {
    width: 22px;
    height: 20px;
}

.panel-tools .text {
    width: auto;
    padding: 0 6px;
}

.panel-form {
    display: flex;
    flex-direction: column;
    flex: 1;
    padding: 0 5px 5px;
}

.panel-form h3 {
    padding: 6px 0 3px;
    font-weight: normal;
}

.panel-list {
    height: 94px;
    margin-bottom: 5px;
    border: 1px solid #c0b88f;
    background: #fff;
}

.panel-list li {
    height: 19px;
    padding-left: 4px;
    line-height: 20px;
}

.panel-list .selected {
    color: #fff;
    background: #6f98ce;
    border-bottom: 1px solid #a9c3e6;
}

.preview {
    flex: 1;
    border: 1px solid #c0b88f;
    background: #eae4d9;
}

.preview-menu {
    display: flex;
    align-items: center;
    padding: 2px;
}

.preview-menu > button, .active {
    height: 17px;
    padding: 0 6px;
    text-decoration: underline;
}

.preview-menu > .new {
    font-weight: bold;
    text-decoration: none;
}

.opened {
    position: relative;
}

.active {
    color: #3b4fa0;
    border: 1px solid #7d9ad8;
    border-bottom: 0;
    border-radius: 3px 3px 0 0;
    background: linear-gradient(#c5dbfb, #8fb2f4);
}

/* Выпадающее меню */
.dropdown {
    position: absolute;
    top: 16px;
    left: 0;
    width: 248px;
    padding: 2px 1px 1px;
    border: 1px solid #b3a97e;
    background: linear-gradient(to right, #fff 1px, #eae4d9 1px 24px, #fff 24px);
}

.dropdown button {
    justify-content: flex-start;
    width: 100%;
    height: 22px;
    padding-left: 30px;
}

.dropdown .icon {
    margin: 0 11px 0 -27px;
}

.dropdown .sub::after {
    content: "";
    margin: 0 6px 0 auto;
    border: solid transparent;
    border-width: 4px 0 4px 5px;
    border-left-color: #33290a;
}

.dropdown .current {
    font-weight: bold;
    color: #36488f;
    border: 1px solid #a4bdec;
    border-radius: 3px;
    background: linear-gradient(#e9f2fe, #c9dffb);
    padding-left: 29px;
}

.dropdown hr {
    height: 1px;
    margin: 1px 5px 1px 27px;
    border: 0;
    background: #e6dfd2;
}

.callouts {
    position: absolute;
    top: -1px;
    left: -1px;
    width: 505px;
    height: 414px;
    pointer-events: none;
}

.callouts text {
    font: bold 13px "Open Sans", sans-serif;
    fill: #e60000;
}

/* Панель окон и строка состояния */
.taskbar {
    height: 20px;
}

.taskbar button {
    gap: 1px;
    height: 19px;
    padding: 0 1px;
    border: 1px solid #c0b88f;
    background: #b1cae6;
}

.statusbar {
    display: flex;
    gap: 5px;
    height: 20px;
    padding-bottom: 1px;
}

.hint, .cell {
    display: flex;
    align-items: center;
    padding: 0 2px;
    border: 1px solid #dcd7bd;
}

.hint {
    flex: 1;
}

.dim {
    color: #aa9a66;
}

.lang {
    gap: 2px;
}

.lang .caret {
    width: 6px;
}

.size-grip {
    align-self: flex-end;
    width: 13px;
    height: 13px;
    margin-left: 9px;
}

.cursor {
    position: absolute;
    right: 0;
    bottom: 0;
    width: 9px;
    height: 6px;
}
```
